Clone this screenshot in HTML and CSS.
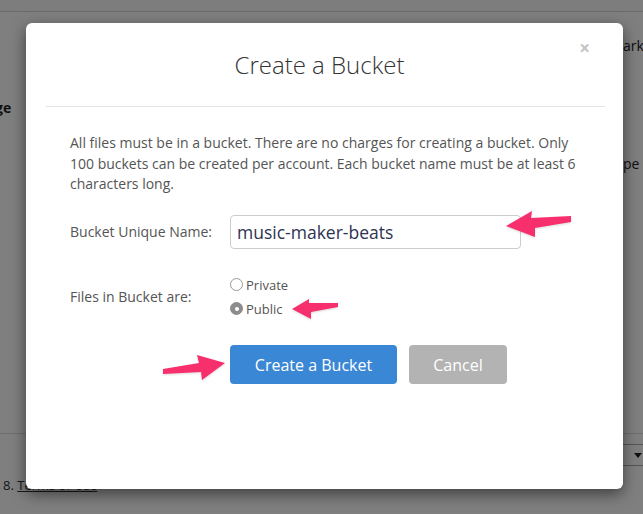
FILE: index.html
```html
<!DOCTYPE html>
<html lang="en">
<head>
  <meta charset="UTF-8" />
  <title>Create a Bucket</title>
  <link rel="stylesheet" href="styles.css">
</head>
<body>
  <!-- page behind the dialog -->
  <div class="page">
    <div class="topbar"></div>
    <div class="page-row row-one"><span class="frag-right">ark</span></div>
    <div class="page-row row-two"><span class="frag-left">ge</span></div>
    <div class="page-row row-three"><span class="frag-right">pe (</span></div>
    <div class="page-rule"></div>
    <div class="page-row row-four">
      <span class="frag-left terms">8. <u>Terms of Use</u></span>
      <span class="select-stub"><span class="caret"></span></span>
    </div>
  </div>

  <div class="backdrop"></div>

  <div class="modal">
    <div class="modal-header">
      <h2>Create a Bucket</h2>
      <span class="close">&times;</span>
    </div>
    <div class="modal-body">
      <p>All files must be in a bucket. There are no charges for creating a bucket. Only 100 buckets can be created per account. Each bucket name must be at least 6 characters long.</p>

      <div class="form-row">
        <label class="field-label">Bucket Unique Name:</label>
        <input type="text" class="name-input" value="music-maker-beats" />
      </div>

      <div class="form-row radios-row">
        <label class="field-label">Files in Bucket are:</label>
        <div class="radio-group">
          <div class="radio"><span class="dot"></span>Private</div>
          <div class="radio"><span class="dot checked"></span>Public</div>
        </div>
      </div>

      <div class="actions">
        <button class="btn btn-primary">Create a Bucket</button>
        <button class="btn btn-cancel">Cancel</button>
      </div>
    </div>
  </div>

  <!-- annotation arrows -->
  <svg class="arrows" width="643" height="514" viewBox="0 0 643 514">
    <g fill="#f82f6d">
      <polygon points="506,226 532,211 531,218 571,216 571,222 535,228 535,237" />
      <polygon points="292,309 309,299 309,303 338,303 338,307 311,312 311,319" />
      <polygon points="225,363 197,355 199,363 163,369 163,374 201,372 202,380" />
    </g>
  </svg>
</body>
</html>
```

FILE: styles.css
```css
body {
  margin: 0;
  width: 643px;
  height: 514px;
  overflow: hidden;
  position: relative;
  background: #fff;
  font-family: "Open Sans", sans-serif;
}

/* background page */
.page {
  color: #222;
  font-size: 14px;
}

.topbar {
  height: 11px;
  background: #fbfbfb;
  border-bottom: 1px solid #d4d4d4;
}

.page-row {
  display: flex;
  height: 20px;
  align-items: center;
}

.row-one {
  margin-top: 23px;
}

.row-two {
  margin-top: 42px;
  font-weight: bold;
}

.row-three {
  margin-top: 36px;
}

.frag-right {
  margin-left: 623px;
  white-space: nowrap;
}

.frag-left {
  margin-left: -5px;
}

.page-rule {
  margin-top: 260px;
  border-top: 1px solid #ddd;
}

.row-four {
  margin-top: 10px;
  height: 22px;
  align-items: flex-start;
}

.terms {
  margin-left: 3px;
  margin-top: 32px;
  font-size: 13px;
  color: #333;
}

.select-stub {
  margin-left: auto;
  width: 20px;
  height: 20px;
  border: 1px solid #aaa;
  border-right: none;
  position: relative;
}

.caret {
  position: absolute;
  right: 1px;
  top: 8px;
  border-left: 4px solid transparent;
  border-right: 4px solid transparent;
  border-top: 5px solid #222;
}

.backdrop {
  position: absolute;
  inset: 0;
  background: rgba(0, 0, 0, 0.5);
}

/* dialog */
.modal {
  position: absolute;
  left: 26px;
  top: 23px;
  width: 597px;
  height: 466px;
  background: #fff;
  border-radius: 6px;
  box-shadow: 0 5px 15px rgba(0, 0, 0, 0.5);
}

.modal-header {
  position: relative;
  margin: 0 18px 0 20px;
  height: 83px;
  padding-right: 12px;
  border-bottom: 1px solid #e5e5e5;
  display: flex;
  align-items: center;
  justify-content: center;
}

.modal-header h2 {
  margin: 0;
  font-size: 24px;
  font-weight: 300;
  color: #333;
}

.close {
  position: absolute;
  right: 15px;
  top: 12px;
  font-size: 19px;
  font-weight: bold;
  color: #c4c4c4;
}

.modal-body {
  padding: 26px 44px 0 44px;
}

.modal-body p {
  margin: 0;
  font-size: 14px;
  line-height: 20.5px;
  color: #555;
}

.form-row {
  display: flex;
  align-items: center;
  margin-top: 20px;
}

.field-label {
  width: 160px;
  flex-shrink: 0;
  font-size: 14px;
  color: #555;
}

.name-input {
  width: 291px;
  height: 34px;
  box-sizing: border-box;
  border: 1px solid #ccc;
  border-radius: 4px;
  padding: 0 6px;
  font-family: "Open Sans", sans-serif;
  font-size: 17.5px;
  color: #2d3352;
}

.radios-row {
  margin-top: 27px;
}

.radio-group {
  display: flex;
  flex-direction: column;
  gap: 6px;
}

.radio {
  display: flex;
  align-items: center;
  height: 18px;
  font-size: 13px;
  color: #555;
}

.dot {
  width: 11px;
  height: 11px;
  border: 1px solid #999;
  border-radius: 50%;
  margin-right: 3px;
  background: #fff;
  position: relative;
}

.dot.checked {
  background: #8c8c8c;
  border-color: #8c8c8c;
}

.dot.checked::after {
  content: "";
  position: absolute;
  left: 3.5px;
  top: 3.5px;
  width: 4px;
  height: 4px;
  border-radius: 50%;
  background: #fff;
}

.actions {
  display: flex;
  gap: 12px;
  margin-top: 27px;
  padding-left: 160px;
}

.btn {
  height: 39px;
  padding-top: 3px;
  border: none;
  border-radius: 4px;
  color: #fff;
  font-family: "Open Sans", sans-serif;
  font-size: 16px;
}

.btn-primary {
  width: 167px;
  background: #3a87d6;
}

.btn-cancel {
  width: 98px;
  background: #b3b3b3;
}

.arrows {
  position: absolute;
  left: 0;
  top: 0;
  pointer-events: none;
  filter: drop-shadow(0 1px 1px rgba(0, 0, 0, 0.15));
}
```
